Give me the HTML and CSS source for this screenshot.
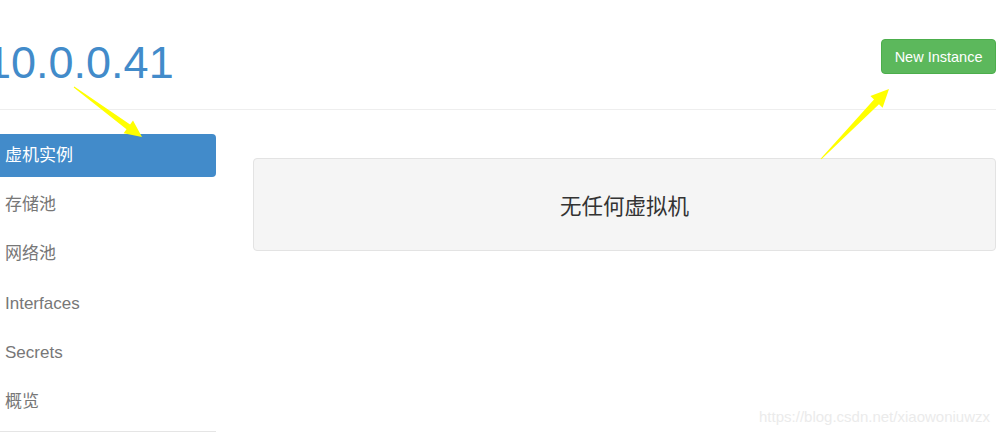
FILE: index.html
```html
<!DOCTYPE html>
<html lang="zh">
<head>
<meta charset="utf-8">
<title>10.0.0.41</title>
<link rel="stylesheet" href="styles.css">
</head>
<body>
<div class="page">
  <header class="header">
    <h1 class="title">10.0.0.41</h1>
    <button class="btn-new">New Instance</button>
  </header>
  <div class="divider"></div>
  <div class="body">
    <aside class="sidebar">
      <ul class="nav">
        <li class="nav-item active">虚机实例</li>
        <li class="nav-item">存储池</li>
        <li class="nav-item">网络池</li>
        <li class="nav-item">Interfaces</li>
        <li class="nav-item">Secrets</li>
        <li class="nav-item">概览</li>
      </ul>
      <div class="side-rule"></div>
    </aside>
    <main class="main">
      <div class="well">无任何虚拟机</div>
    </main>
  </div>
</div>
<svg class="arrows" width="1000" height="435" viewBox="0 0 1000 435">
  <polygon fill="#ffff00" points="73.7,87.4 126.5,129.3 123.6,133.3 142,137 133,120.5 130.1,124.5 74.3,86.6"/>
  <polygon fill="#ffff00" points="821.4,159.3 879,104.3 882.6,107.8 889,89 870.4,96 874,99.5 820.6,158.7"/>
</svg>
<div class="watermark">https://blog.csdn.net/xiaowoniuwzx</div>
</body>
</html>
```
FILE: styles.css
```css
html, body {
  margin: 0;
  padding: 0;
  background: #fff;
  overflow: hidden;
  width: 1000px;
  height: 435px;
  position: relative;
}
body {
  font-family: "Liberation Sans", Arial, "Noto Sans CJK SC", sans-serif;
}
.page {
  width: 1006px;
  margin-left: -10px;
}
.header {
  display: flex;
  justify-content: space-between;
  align-items: flex-start;
  padding-top: 38px;
}
.title {
  margin: 0 0 0 -4px;
  font-size: 45px;
  line-height: 50px;
  font-weight: normal;
  color: #428bca;
}
.btn-new {
  margin-top: 1px;
  height: 35px;
  padding: 0 12.5px;
  background: #5cb85c;
  border: 1px solid #4cae4c;
  border-radius: 4px;
  color: #fff;
  font-family: "Liberation Sans", Arial, sans-serif;
  font-size: 14.5px;
}
.divider {
  margin-top: 21px;
  height: 1px;
  background: #eeeeee;
}
.body {
  display: flex;
  margin-top: 24px;
}
.sidebar {
  width: 226px;
  flex: none;
}
.nav {
  list-style: none;
  margin: 0;
  padding: 0;
  display: flex;
  flex-direction: column;
  gap: 6.2px;
}
.nav-item {
  padding: 11px 15px;
  line-height: 21px;
  font-size: 17px;
  color: #777;
  border-radius: 4px;
  font-family: "Liberation Sans", Arial, "Noto Sans CJK SC", sans-serif;
}
.nav-item.active {
  background: #428bca;
  color: #fff;
}
.side-rule {
  margin-top: 8px;
  margin-left: 10px;
  height: 1px;
  background: #e5e5e5;
}
.main {
  flex: 1;
  margin-left: 37px;
  padding-top: 24px;
}
.well {
  height: 91px;
  display: flex;
  align-items: center;
  justify-content: center;
  background: #f5f5f5;
  border: 1px solid #e3e3e3;
  border-radius: 4px;
  font-family: "Noto Sans CJK SC", sans-serif;
  font-size: 21.5px;
  color: #333;
}
.arrows {
  position: absolute;
  left: 0;
  top: 0;
  pointer-events: none;
}
.watermark {
  position: absolute;
  right: 10px;
  top: 407px;
  font-size: 15px;
  line-height: 20px;
  color: #ebebeb;
  font-family: "Liberation Sans", Arial, sans-serif;
}
```
